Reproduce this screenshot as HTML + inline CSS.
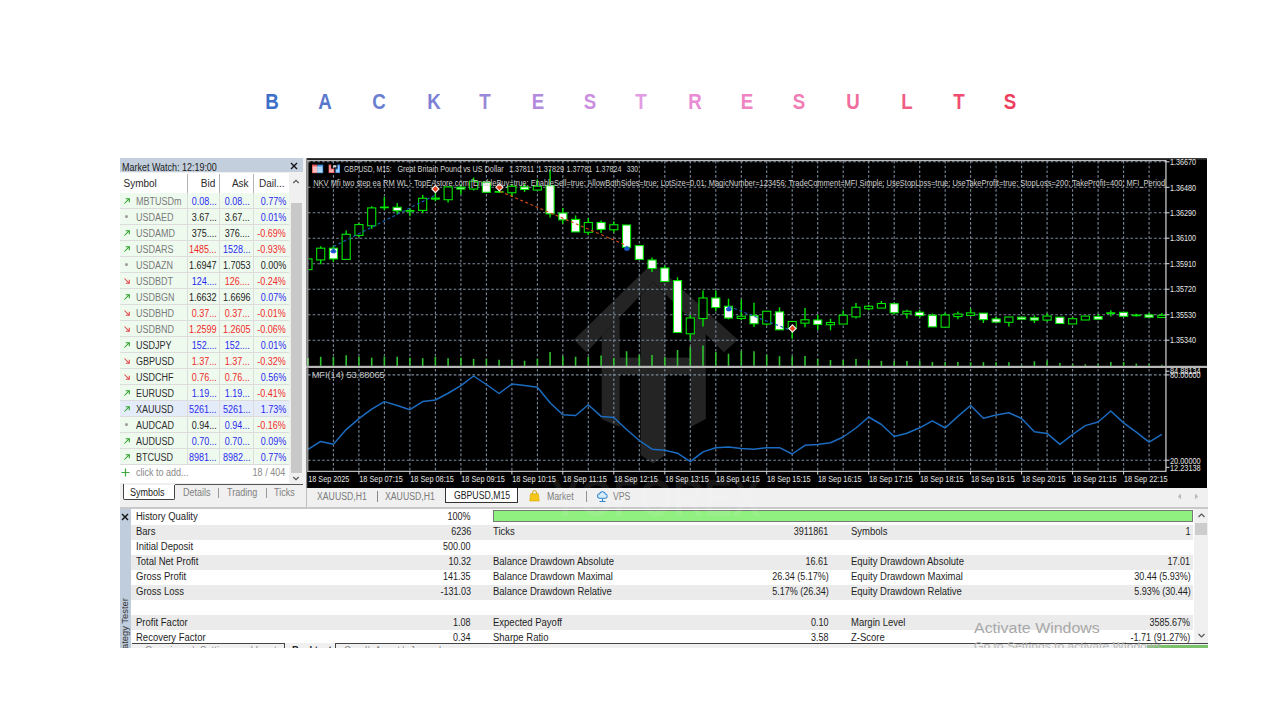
<!DOCTYPE html>
<html><head><meta charset="utf-8"><style>
html,body{margin:0;padding:0;background:#fff}
body{width:1280px;height:720px;position:relative;overflow:hidden;font-family:"Liberation Sans", sans-serif}
.t{position:absolute;white-space:nowrap;line-height:1;font-family:"Liberation Sans", sans-serif}
.r{text-align:right}
.tt{position:absolute;top:91.7px;width:40px;text-align:center;font-size:21.5px;font-weight:bold;line-height:1;transform:scaleX(0.87);transform-origin:50% 0;font-family:"Liberation Sans", sans-serif}
</style></head><body>
<div class="tt" style="left:251.5px;color:#3c70c8">B</div>
<div class="tt" style="left:304.8px;color:#5877cc">A</div>
<div class="tt" style="left:359.2px;color:#6b7fd2">C</div>
<div class="tt" style="left:413.5px;color:#7e80d6">K</div>
<div class="tt" style="left:465.2px;color:#9a88d8">T</div>
<div class="tt" style="left:517.6px;color:#b38bdc">E</div>
<div class="tt" style="left:569.5px;color:#cc8fe0">S</div>
<div class="tt" style="left:621px;color:#e39ce4">T</div>
<div class="tt" style="left:674.6px;color:#e88cd4">R</div>
<div class="tt" style="left:727px;color:#ee84c2">E</div>
<div class="tt" style="left:779px;color:#f07eb4">S</div>
<div class="tt" style="left:833px;color:#f06d9c">U</div>
<div class="tt" style="left:887px;color:#f05d86">L</div>
<div class="tt" style="left:938.5px;color:#f04d72">T</div>
<div class="tt" style="left:990.3px;color:#ef3f5e">S</div>
<div style="position:absolute;left:119.7px;top:158px;width:186.3px;height:350px;background:#f0f0f0"></div>
<div style="position:absolute;left:119.7px;top:158.3px;width:183.8px;height:14.2px;background:#c3cfdd"></div>
<div class="t" style="left:121.5px;top:162.6px;font-size:10.2px;color:#1c1c1c;transform:scaleX(0.88);transform-origin:0 0;">Market Watch: 12:19:00</div>
<svg style="position:absolute;left:290.1px;top:162px" width="8" height="8" viewBox="0 0 8 8"><path d="M1 1 L7 7 M7 1 L1 7" stroke="#111" stroke-width="1.4"/></svg>
<div style="position:absolute;left:119.7px;top:172.5px;width:169.8px;height:20.5px;background:#fff"></div>
<div style="position:absolute;left:289.5px;top:172.5px;width:13.5px;height:311px;background:#f0f0f0"></div>
<div style="position:absolute;left:290.5px;top:203px;width:11.5px;height:270px;background:#c8c8c8"></div>
<svg style="position:absolute;left:291px;top:178px" width="10" height="7" viewBox="0 0 10 7"><path d="M2.3 5 L5 2.3 L7.7 5" stroke="#555" stroke-width="1.2" fill="none"/></svg>
<svg style="position:absolute;left:291px;top:475px" width="10" height="7" viewBox="0 0 10 7"><path d="M2.3 2 L5 4.7 L7.7 2" stroke="#555" stroke-width="1.2" fill="none"/></svg>
<div class="t" style="left:123.5px;top:179.2px;font-size:10px;color:#2a2a2a;transform:scaleX(1.0);transform-origin:0 0;">Symbol</div>
<div class="t" style="right:1064.70px;top:179.2px;font-size:10px;color:#2a2a2a;transform:scaleX(1.0);transform-origin:100% 0;">Bid</div>
<div class="t" style="right:1031.40px;top:179.2px;font-size:10px;color:#2a2a2a;transform:scaleX(1.0);transform-origin:100% 0;">Ask</div>
<div class="t" style="right:995.40px;top:179.2px;font-size:10px;color:#2a2a2a;transform:scaleX(1.0);transform-origin:100% 0;">Dail...</div>
<div style="position:absolute;left:186.6px;top:174px;width:1px;height:19px;background:#b4b4b4"></div>
<div style="position:absolute;left:219.4px;top:174px;width:1px;height:19px;background:#b4b4b4"></div>
<div style="position:absolute;left:252.5px;top:174px;width:1px;height:19px;background:#b4b4b4"></div>
<div style="position:absolute;left:119.7px;top:193px;width:169.8px;height:15px;background:#effaef"></div>
<div style="position:absolute;left:119.7px;top:208px;width:169.8px;height:1px;background:#dcdcdc"></div>
<div style="position:absolute;left:186.6px;top:193px;width:1px;height:15px;background:#dcdcdc"></div>
<div style="position:absolute;left:219.4px;top:193px;width:1px;height:15px;background:#dcdcdc"></div>
<div style="position:absolute;left:252.5px;top:193px;width:1px;height:15px;background:#dcdcdc"></div>
<svg style="position:absolute;left:122.5px;top:196.8px" width="8" height="8" viewBox="0 0 8 8"><path d="M1.5 6.5 L6.3 1.7 M2.8 1.7 H6.3 V5.2" stroke="#2aa52a" stroke-width="1.05" fill="none"/></svg>
<div class="t" style="left:135.7px;top:196.9px;font-size:10px;color:#7a7a7a;transform:scaleX(0.9);transform-origin:0 0;">MBTUSDm</div>
<div class="t" style="right:1063.30px;top:196.9px;font-size:10px;color:#2b2bf0;transform:scaleX(0.9);transform-origin:100% 0;">0.08...</div>
<div class="t" style="right:1029.80px;top:196.9px;font-size:10px;color:#2b2bf0;transform:scaleX(0.9);transform-origin:100% 0;">0.08...</div>
<div class="t" style="right:993.90px;top:196.9px;font-size:10px;color:#2b2bf0;transform:scaleX(0.9);transform-origin:100% 0;">0.77%</div>
<div style="position:absolute;left:119.7px;top:209px;width:169.8px;height:15px;background:#effaef"></div>
<div style="position:absolute;left:119.7px;top:224px;width:169.8px;height:1px;background:#dcdcdc"></div>
<div style="position:absolute;left:186.6px;top:209px;width:1px;height:15px;background:#dcdcdc"></div>
<div style="position:absolute;left:219.4px;top:209px;width:1px;height:15px;background:#dcdcdc"></div>
<div style="position:absolute;left:252.5px;top:209px;width:1px;height:15px;background:#dcdcdc"></div>
<div style="position:absolute;left:124.9px;top:215.20000000000002px;width:3.2px;height:3.2px;border-radius:50%;background:#9a9a9a"></div>
<div class="t" style="left:135.7px;top:212.9px;font-size:10px;color:#7a7a7a;transform:scaleX(0.9);transform-origin:0 0;">USDAED</div>
<div class="t" style="right:1063.30px;top:212.9px;font-size:10px;color:#222;transform:scaleX(0.9);transform-origin:100% 0;">3.67...</div>
<div class="t" style="right:1029.80px;top:212.9px;font-size:10px;color:#222;transform:scaleX(0.9);transform-origin:100% 0;">3.67...</div>
<div class="t" style="right:993.90px;top:212.9px;font-size:10px;color:#2b2bf0;transform:scaleX(0.9);transform-origin:100% 0;">0.01%</div>
<div style="position:absolute;left:119.7px;top:225px;width:169.8px;height:15px;background:#effaef"></div>
<div style="position:absolute;left:119.7px;top:240px;width:169.8px;height:1px;background:#dcdcdc"></div>
<div style="position:absolute;left:186.6px;top:225px;width:1px;height:15px;background:#dcdcdc"></div>
<div style="position:absolute;left:219.4px;top:225px;width:1px;height:15px;background:#dcdcdc"></div>
<div style="position:absolute;left:252.5px;top:225px;width:1px;height:15px;background:#dcdcdc"></div>
<svg style="position:absolute;left:122.5px;top:228.8px" width="8" height="8" viewBox="0 0 8 8"><path d="M1.5 6.5 L6.3 1.7 M2.8 1.7 H6.3 V5.2" stroke="#2aa52a" stroke-width="1.05" fill="none"/></svg>
<div class="t" style="left:135.7px;top:228.9px;font-size:10px;color:#7a7a7a;transform:scaleX(0.9);transform-origin:0 0;">USDAMD</div>
<div class="t" style="right:1063.30px;top:228.9px;font-size:10px;color:#222;transform:scaleX(0.9);transform-origin:100% 0;">375....</div>
<div class="t" style="right:1029.80px;top:228.9px;font-size:10px;color:#222;transform:scaleX(0.9);transform-origin:100% 0;">376....</div>
<div class="t" style="right:993.90px;top:228.9px;font-size:10px;color:#f02a2a;transform:scaleX(0.9);transform-origin:100% 0;">-0.69%</div>
<div style="position:absolute;left:119.7px;top:241px;width:169.8px;height:15px;background:#effaef"></div>
<div style="position:absolute;left:119.7px;top:256px;width:169.8px;height:1px;background:#dcdcdc"></div>
<div style="position:absolute;left:186.6px;top:241px;width:1px;height:15px;background:#dcdcdc"></div>
<div style="position:absolute;left:219.4px;top:241px;width:1px;height:15px;background:#dcdcdc"></div>
<div style="position:absolute;left:252.5px;top:241px;width:1px;height:15px;background:#dcdcdc"></div>
<svg style="position:absolute;left:122.5px;top:244.8px" width="8" height="8" viewBox="0 0 8 8"><path d="M1.5 6.5 L6.3 1.7 M2.8 1.7 H6.3 V5.2" stroke="#2aa52a" stroke-width="1.05" fill="none"/></svg>
<div class="t" style="left:135.7px;top:244.9px;font-size:10px;color:#7a7a7a;transform:scaleX(0.9);transform-origin:0 0;">USDARS</div>
<div class="t" style="right:1063.30px;top:244.9px;font-size:10px;color:#f02a2a;transform:scaleX(0.9);transform-origin:100% 0;">1485...</div>
<div class="t" style="right:1029.80px;top:244.9px;font-size:10px;color:#2b2bf0;transform:scaleX(0.9);transform-origin:100% 0;">1528...</div>
<div class="t" style="right:993.90px;top:244.9px;font-size:10px;color:#f02a2a;transform:scaleX(0.9);transform-origin:100% 0;">-0.93%</div>
<div style="position:absolute;left:119.7px;top:257px;width:169.8px;height:15px;background:#effaef"></div>
<div style="position:absolute;left:119.7px;top:272px;width:169.8px;height:1px;background:#dcdcdc"></div>
<div style="position:absolute;left:186.6px;top:257px;width:1px;height:15px;background:#dcdcdc"></div>
<div style="position:absolute;left:219.4px;top:257px;width:1px;height:15px;background:#dcdcdc"></div>
<div style="position:absolute;left:252.5px;top:257px;width:1px;height:15px;background:#dcdcdc"></div>
<div style="position:absolute;left:124.9px;top:263.2px;width:3.2px;height:3.2px;border-radius:50%;background:#9a9a9a"></div>
<div class="t" style="left:135.7px;top:260.9px;font-size:10px;color:#7a7a7a;transform:scaleX(0.9);transform-origin:0 0;">USDAZN</div>
<div class="t" style="right:1063.30px;top:260.9px;font-size:10px;color:#222;transform:scaleX(0.9);transform-origin:100% 0;">1.6947</div>
<div class="t" style="right:1029.80px;top:260.9px;font-size:10px;color:#222;transform:scaleX(0.9);transform-origin:100% 0;">1.7053</div>
<div class="t" style="right:993.90px;top:260.9px;font-size:10px;color:#222;transform:scaleX(0.9);transform-origin:100% 0;">0.00%</div>
<div style="position:absolute;left:119.7px;top:273px;width:169.8px;height:15px;background:#effaef"></div>
<div style="position:absolute;left:119.7px;top:288px;width:169.8px;height:1px;background:#dcdcdc"></div>
<div style="position:absolute;left:186.6px;top:273px;width:1px;height:15px;background:#dcdcdc"></div>
<div style="position:absolute;left:219.4px;top:273px;width:1px;height:15px;background:#dcdcdc"></div>
<div style="position:absolute;left:252.5px;top:273px;width:1px;height:15px;background:#dcdcdc"></div>
<svg style="position:absolute;left:122.5px;top:276.8px" width="8" height="8" viewBox="0 0 8 8"><path d="M1.5 1.5 L6.3 6.3 M2.8 6.3 H6.3 V2.8" stroke="#e04848" stroke-width="1.05" fill="none"/></svg>
<div class="t" style="left:135.7px;top:276.9px;font-size:10px;color:#7a7a7a;transform:scaleX(0.9);transform-origin:0 0;">USDBDT</div>
<div class="t" style="right:1063.30px;top:276.9px;font-size:10px;color:#2b2bf0;transform:scaleX(0.9);transform-origin:100% 0;">124....</div>
<div class="t" style="right:1029.80px;top:276.9px;font-size:10px;color:#f02a2a;transform:scaleX(0.9);transform-origin:100% 0;">126....</div>
<div class="t" style="right:993.90px;top:276.9px;font-size:10px;color:#f02a2a;transform:scaleX(0.9);transform-origin:100% 0;">-0.24%</div>
<div style="position:absolute;left:119.7px;top:289px;width:169.8px;height:15px;background:#effaef"></div>
<div style="position:absolute;left:119.7px;top:304px;width:169.8px;height:1px;background:#dcdcdc"></div>
<div style="position:absolute;left:186.6px;top:289px;width:1px;height:15px;background:#dcdcdc"></div>
<div style="position:absolute;left:219.4px;top:289px;width:1px;height:15px;background:#dcdcdc"></div>
<div style="position:absolute;left:252.5px;top:289px;width:1px;height:15px;background:#dcdcdc"></div>
<svg style="position:absolute;left:122.5px;top:292.8px" width="8" height="8" viewBox="0 0 8 8"><path d="M1.5 6.5 L6.3 1.7 M2.8 1.7 H6.3 V5.2" stroke="#2aa52a" stroke-width="1.05" fill="none"/></svg>
<div class="t" style="left:135.7px;top:292.9px;font-size:10px;color:#7a7a7a;transform:scaleX(0.9);transform-origin:0 0;">USDBGN</div>
<div class="t" style="right:1063.30px;top:292.9px;font-size:10px;color:#222;transform:scaleX(0.9);transform-origin:100% 0;">1.6632</div>
<div class="t" style="right:1029.80px;top:292.9px;font-size:10px;color:#222;transform:scaleX(0.9);transform-origin:100% 0;">1.6696</div>
<div class="t" style="right:993.90px;top:292.9px;font-size:10px;color:#2b2bf0;transform:scaleX(0.9);transform-origin:100% 0;">0.07%</div>
<div style="position:absolute;left:119.7px;top:305px;width:169.8px;height:15px;background:#effaef"></div>
<div style="position:absolute;left:119.7px;top:320px;width:169.8px;height:1px;background:#dcdcdc"></div>
<div style="position:absolute;left:186.6px;top:305px;width:1px;height:15px;background:#dcdcdc"></div>
<div style="position:absolute;left:219.4px;top:305px;width:1px;height:15px;background:#dcdcdc"></div>
<div style="position:absolute;left:252.5px;top:305px;width:1px;height:15px;background:#dcdcdc"></div>
<svg style="position:absolute;left:122.5px;top:308.8px" width="8" height="8" viewBox="0 0 8 8"><path d="M1.5 1.5 L6.3 6.3 M2.8 6.3 H6.3 V2.8" stroke="#e04848" stroke-width="1.05" fill="none"/></svg>
<div class="t" style="left:135.7px;top:308.9px;font-size:10px;color:#7a7a7a;transform:scaleX(0.9);transform-origin:0 0;">USDBHD</div>
<div class="t" style="right:1063.30px;top:308.9px;font-size:10px;color:#f02a2a;transform:scaleX(0.9);transform-origin:100% 0;">0.37...</div>
<div class="t" style="right:1029.80px;top:308.9px;font-size:10px;color:#f02a2a;transform:scaleX(0.9);transform-origin:100% 0;">0.37...</div>
<div class="t" style="right:993.90px;top:308.9px;font-size:10px;color:#f02a2a;transform:scaleX(0.9);transform-origin:100% 0;">-0.01%</div>
<div style="position:absolute;left:119.7px;top:321px;width:169.8px;height:15px;background:#effaef"></div>
<div style="position:absolute;left:119.7px;top:336px;width:169.8px;height:1px;background:#dcdcdc"></div>
<div style="position:absolute;left:186.6px;top:321px;width:1px;height:15px;background:#dcdcdc"></div>
<div style="position:absolute;left:219.4px;top:321px;width:1px;height:15px;background:#dcdcdc"></div>
<div style="position:absolute;left:252.5px;top:321px;width:1px;height:15px;background:#dcdcdc"></div>
<svg style="position:absolute;left:122.5px;top:324.8px" width="8" height="8" viewBox="0 0 8 8"><path d="M1.5 1.5 L6.3 6.3 M2.8 6.3 H6.3 V2.8" stroke="#e04848" stroke-width="1.05" fill="none"/></svg>
<div class="t" style="left:135.7px;top:324.9px;font-size:10px;color:#7a7a7a;transform:scaleX(0.9);transform-origin:0 0;">USDBND</div>
<div class="t" style="right:1063.30px;top:324.9px;font-size:10px;color:#f02a2a;transform:scaleX(0.9);transform-origin:100% 0;">1.2599</div>
<div class="t" style="right:1029.80px;top:324.9px;font-size:10px;color:#f02a2a;transform:scaleX(0.9);transform-origin:100% 0;">1.2605</div>
<div class="t" style="right:993.90px;top:324.9px;font-size:10px;color:#f02a2a;transform:scaleX(0.9);transform-origin:100% 0;">-0.06%</div>
<div style="position:absolute;left:119.7px;top:337px;width:169.8px;height:15px;background:#effaef"></div>
<div style="position:absolute;left:119.7px;top:352px;width:169.8px;height:1px;background:#dcdcdc"></div>
<div style="position:absolute;left:186.6px;top:337px;width:1px;height:15px;background:#dcdcdc"></div>
<div style="position:absolute;left:219.4px;top:337px;width:1px;height:15px;background:#dcdcdc"></div>
<div style="position:absolute;left:252.5px;top:337px;width:1px;height:15px;background:#dcdcdc"></div>
<svg style="position:absolute;left:122.5px;top:340.8px" width="8" height="8" viewBox="0 0 8 8"><path d="M1.5 6.5 L6.3 1.7 M2.8 1.7 H6.3 V5.2" stroke="#2aa52a" stroke-width="1.05" fill="none"/></svg>
<div class="t" style="left:135.7px;top:340.9px;font-size:10px;color:#2e2e2e;transform:scaleX(0.9);transform-origin:0 0;">USDJPY</div>
<div class="t" style="right:1063.30px;top:340.9px;font-size:10px;color:#2b2bf0;transform:scaleX(0.9);transform-origin:100% 0;">152....</div>
<div class="t" style="right:1029.80px;top:340.9px;font-size:10px;color:#2b2bf0;transform:scaleX(0.9);transform-origin:100% 0;">152....</div>
<div class="t" style="right:993.90px;top:340.9px;font-size:10px;color:#2b2bf0;transform:scaleX(0.9);transform-origin:100% 0;">0.01%</div>
<div style="position:absolute;left:119.7px;top:353px;width:169.8px;height:15px;background:#effaef"></div>
<div style="position:absolute;left:119.7px;top:368px;width:169.8px;height:1px;background:#dcdcdc"></div>
<div style="position:absolute;left:186.6px;top:353px;width:1px;height:15px;background:#dcdcdc"></div>
<div style="position:absolute;left:219.4px;top:353px;width:1px;height:15px;background:#dcdcdc"></div>
<div style="position:absolute;left:252.5px;top:353px;width:1px;height:15px;background:#dcdcdc"></div>
<svg style="position:absolute;left:122.5px;top:356.8px" width="8" height="8" viewBox="0 0 8 8"><path d="M1.5 1.5 L6.3 6.3 M2.8 6.3 H6.3 V2.8" stroke="#e04848" stroke-width="1.05" fill="none"/></svg>
<div class="t" style="left:135.7px;top:356.9px;font-size:10px;color:#2e2e2e;transform:scaleX(0.9);transform-origin:0 0;">GBPUSD</div>
<div class="t" style="right:1063.30px;top:356.9px;font-size:10px;color:#f02a2a;transform:scaleX(0.9);transform-origin:100% 0;">1.37...</div>
<div class="t" style="right:1029.80px;top:356.9px;font-size:10px;color:#f02a2a;transform:scaleX(0.9);transform-origin:100% 0;">1.37...</div>
<div class="t" style="right:993.90px;top:356.9px;font-size:10px;color:#f02a2a;transform:scaleX(0.9);transform-origin:100% 0;">-0.32%</div>
<div style="position:absolute;left:119.7px;top:369px;width:169.8px;height:15px;background:#effaef"></div>
<div style="position:absolute;left:119.7px;top:384px;width:169.8px;height:1px;background:#dcdcdc"></div>
<div style="position:absolute;left:186.6px;top:369px;width:1px;height:15px;background:#dcdcdc"></div>
<div style="position:absolute;left:219.4px;top:369px;width:1px;height:15px;background:#dcdcdc"></div>
<div style="position:absolute;left:252.5px;top:369px;width:1px;height:15px;background:#dcdcdc"></div>
<svg style="position:absolute;left:122.5px;top:372.8px" width="8" height="8" viewBox="0 0 8 8"><path d="M1.5 1.5 L6.3 6.3 M2.8 6.3 H6.3 V2.8" stroke="#e04848" stroke-width="1.05" fill="none"/></svg>
<div class="t" style="left:135.7px;top:372.9px;font-size:10px;color:#2e2e2e;transform:scaleX(0.9);transform-origin:0 0;">USDCHF</div>
<div class="t" style="right:1063.30px;top:372.9px;font-size:10px;color:#f02a2a;transform:scaleX(0.9);transform-origin:100% 0;">0.76...</div>
<div class="t" style="right:1029.80px;top:372.9px;font-size:10px;color:#f02a2a;transform:scaleX(0.9);transform-origin:100% 0;">0.76...</div>
<div class="t" style="right:993.90px;top:372.9px;font-size:10px;color:#2b2bf0;transform:scaleX(0.9);transform-origin:100% 0;">0.56%</div>
<div style="position:absolute;left:119.7px;top:385px;width:169.8px;height:15px;background:#effaef"></div>
<div style="position:absolute;left:119.7px;top:400px;width:169.8px;height:1px;background:#dcdcdc"></div>
<div style="position:absolute;left:186.6px;top:385px;width:1px;height:15px;background:#dcdcdc"></div>
<div style="position:absolute;left:219.4px;top:385px;width:1px;height:15px;background:#dcdcdc"></div>
<div style="position:absolute;left:252.5px;top:385px;width:1px;height:15px;background:#dcdcdc"></div>
<svg style="position:absolute;left:122.5px;top:388.8px" width="8" height="8" viewBox="0 0 8 8"><path d="M1.5 6.5 L6.3 1.7 M2.8 1.7 H6.3 V5.2" stroke="#2aa52a" stroke-width="1.05" fill="none"/></svg>
<div class="t" style="left:135.7px;top:388.9px;font-size:10px;color:#2e2e2e;transform:scaleX(0.9);transform-origin:0 0;">EURUSD</div>
<div class="t" style="right:1063.30px;top:388.9px;font-size:10px;color:#2b2bf0;transform:scaleX(0.9);transform-origin:100% 0;">1.19...</div>
<div class="t" style="right:1029.80px;top:388.9px;font-size:10px;color:#2b2bf0;transform:scaleX(0.9);transform-origin:100% 0;">1.19...</div>
<div class="t" style="right:993.90px;top:388.9px;font-size:10px;color:#f02a2a;transform:scaleX(0.9);transform-origin:100% 0;">-0.41%</div>
<div style="position:absolute;left:119.7px;top:401px;width:169.8px;height:15px;background:#e3ecf8"></div>
<div style="position:absolute;left:119.7px;top:416px;width:169.8px;height:1px;background:#dcdcdc"></div>
<div style="position:absolute;left:186.6px;top:401px;width:1px;height:15px;background:#dcdcdc"></div>
<div style="position:absolute;left:219.4px;top:401px;width:1px;height:15px;background:#dcdcdc"></div>
<div style="position:absolute;left:252.5px;top:401px;width:1px;height:15px;background:#dcdcdc"></div>
<svg style="position:absolute;left:122.5px;top:404.8px" width="8" height="8" viewBox="0 0 8 8"><path d="M1.5 6.5 L6.3 1.7 M2.8 1.7 H6.3 V5.2" stroke="#2aa52a" stroke-width="1.05" fill="none"/></svg>
<div class="t" style="left:135.7px;top:404.9px;font-size:10px;color:#2e2e2e;transform:scaleX(0.9);transform-origin:0 0;">XAUUSD</div>
<div class="t" style="right:1063.30px;top:404.9px;font-size:10px;color:#2b2bf0;transform:scaleX(0.9);transform-origin:100% 0;">5261...</div>
<div class="t" style="right:1029.80px;top:404.9px;font-size:10px;color:#2b2bf0;transform:scaleX(0.9);transform-origin:100% 0;">5261...</div>
<div class="t" style="right:993.90px;top:404.9px;font-size:10px;color:#2b2bf0;transform:scaleX(0.9);transform-origin:100% 0;">1.73%</div>
<div style="position:absolute;left:119.7px;top:417px;width:169.8px;height:15px;background:#effaef"></div>
<div style="position:absolute;left:119.7px;top:432px;width:169.8px;height:1px;background:#dcdcdc"></div>
<div style="position:absolute;left:186.6px;top:417px;width:1px;height:15px;background:#dcdcdc"></div>
<div style="position:absolute;left:219.4px;top:417px;width:1px;height:15px;background:#dcdcdc"></div>
<div style="position:absolute;left:252.5px;top:417px;width:1px;height:15px;background:#dcdcdc"></div>
<div style="position:absolute;left:124.9px;top:423.2px;width:3.2px;height:3.2px;border-radius:50%;background:#9a9a9a"></div>
<div class="t" style="left:135.7px;top:420.9px;font-size:10px;color:#2e2e2e;transform:scaleX(0.9);transform-origin:0 0;">AUDCAD</div>
<div class="t" style="right:1063.30px;top:420.9px;font-size:10px;color:#222;transform:scaleX(0.9);transform-origin:100% 0;">0.94...</div>
<div class="t" style="right:1029.80px;top:420.9px;font-size:10px;color:#2b2bf0;transform:scaleX(0.9);transform-origin:100% 0;">0.94...</div>
<div class="t" style="right:993.90px;top:420.9px;font-size:10px;color:#f02a2a;transform:scaleX(0.9);transform-origin:100% 0;">-0.16%</div>
<div style="position:absolute;left:119.7px;top:433px;width:169.8px;height:15px;background:#effaef"></div>
<div style="position:absolute;left:119.7px;top:448px;width:169.8px;height:1px;background:#dcdcdc"></div>
<div style="position:absolute;left:186.6px;top:433px;width:1px;height:15px;background:#dcdcdc"></div>
<div style="position:absolute;left:219.4px;top:433px;width:1px;height:15px;background:#dcdcdc"></div>
<div style="position:absolute;left:252.5px;top:433px;width:1px;height:15px;background:#dcdcdc"></div>
<svg style="position:absolute;left:122.5px;top:436.8px" width="8" height="8" viewBox="0 0 8 8"><path d="M1.5 6.5 L6.3 1.7 M2.8 1.7 H6.3 V5.2" stroke="#2aa52a" stroke-width="1.05" fill="none"/></svg>
<div class="t" style="left:135.7px;top:436.9px;font-size:10px;color:#2e2e2e;transform:scaleX(0.9);transform-origin:0 0;">AUDUSD</div>
<div class="t" style="right:1063.30px;top:436.9px;font-size:10px;color:#2b2bf0;transform:scaleX(0.9);transform-origin:100% 0;">0.70...</div>
<div class="t" style="right:1029.80px;top:436.9px;font-size:10px;color:#2b2bf0;transform:scaleX(0.9);transform-origin:100% 0;">0.70...</div>
<div class="t" style="right:993.90px;top:436.9px;font-size:10px;color:#2b2bf0;transform:scaleX(0.9);transform-origin:100% 0;">0.09%</div>
<div style="position:absolute;left:119.7px;top:449px;width:169.8px;height:15px;background:#effaef"></div>
<div style="position:absolute;left:119.7px;top:464px;width:169.8px;height:1px;background:#dcdcdc"></div>
<div style="position:absolute;left:186.6px;top:449px;width:1px;height:15px;background:#dcdcdc"></div>
<div style="position:absolute;left:219.4px;top:449px;width:1px;height:15px;background:#dcdcdc"></div>
<div style="position:absolute;left:252.5px;top:449px;width:1px;height:15px;background:#dcdcdc"></div>
<svg style="position:absolute;left:122.5px;top:452.8px" width="8" height="8" viewBox="0 0 8 8"><path d="M1.5 6.5 L6.3 1.7 M2.8 1.7 H6.3 V5.2" stroke="#2aa52a" stroke-width="1.05" fill="none"/></svg>
<div class="t" style="left:135.7px;top:452.9px;font-size:10px;color:#2e2e2e;transform:scaleX(0.9);transform-origin:0 0;">BTCUSD</div>
<div class="t" style="right:1063.30px;top:452.9px;font-size:10px;color:#2b2bf0;transform:scaleX(0.9);transform-origin:100% 0;">8981...</div>
<div class="t" style="right:1029.80px;top:452.9px;font-size:10px;color:#2b2bf0;transform:scaleX(0.9);transform-origin:100% 0;">8982...</div>
<div class="t" style="right:993.90px;top:452.9px;font-size:10px;color:#2b2bf0;transform:scaleX(0.9);transform-origin:100% 0;">0.77%</div>
<div style="position:absolute;left:119.7px;top:465px;width:169.8px;height:18px;background:#fff"></div>
<svg style="position:absolute;left:121.4px;top:468.4px" width="9" height="9" viewBox="0 0 9 9"><path d="M4.5 0.5 V8.5 M0.5 4.5 H8.5" stroke="#3aa83a" stroke-width="1.2"/></svg>
<div class="t" style="left:135.7px;top:467.6px;font-size:10px;color:#8a8a8a;transform:scaleX(0.9);transform-origin:0 0;">click to add...</div>
<div class="t" style="right:994.50px;top:467.6px;font-size:10px;color:#8a8a8a;transform:scaleX(0.9);transform-origin:100% 0;">18 / 404</div>
<div style="position:absolute;left:174.5px;top:484px;width:128.5px;height:1.4px;background:#555"></div>
<div style="position:absolute;left:122.6px;top:484.5px;width:50.6px;height:14.4px;border:1.3px solid #444;border-top:none;background:#fff;border-radius:0 0 2px 2px"></div>
<div style="position:absolute;left:122.6px;top:484px;width:1.3px;height:3px;background:#444"></div>
<div class="t" style="left:130.4px;top:487.9px;font-size:10px;color:#222;transform:scaleX(0.9);transform-origin:0 0;">Symbols</div>
<div class="t" style="left:182.6px;top:487.9px;font-size:10px;color:#808080;transform:scaleX(0.9);transform-origin:0 0;">Details</div>
<div style="position:absolute;left:218.4px;top:488px;width:1px;height:10px;background:#999"></div>
<div class="t" style="left:227.2px;top:487.9px;font-size:10px;color:#808080;transform:scaleX(0.9);transform-origin:0 0;">Trading</div>
<div style="position:absolute;left:265.5px;top:488px;width:1px;height:10px;background:#999"></div>
<div class="t" style="left:274px;top:487.9px;font-size:10px;color:#808080;transform:scaleX(0.9);transform-origin:0 0;">Ticks</div>
<svg width="901" height="330" viewBox="306 158 901 330" style="position:absolute;left:306px;top:158px">
<rect x="306" y="158" width="901" height="330" fill="#000"/>
<rect x="306" y="158" width="901" height="1.6" fill="#3a3a3a"/>
<rect x="306" y="158" width="1.2" height="330" fill="#8a8a8a"/>
<g fill="#242424">
<polygon points="573.9,339.7 653,262.5 737.8,339.7 723.9,352.2 653,282 586.4,352.2"/>
<polygon points="601.7,336.1 619.7,317.2 619.7,427 601.7,419"/>
<polygon points="640.6,295.5 653,282 665.6,295 665.6,455 653,463.5 640.6,455"/>
<polygon points="690.6,319 705.8,334 705.8,419 690.6,427"/>
<rect x="603.7" y="357.6" width="101.1" height="17.1"/>
</g>
<g stroke="#7c8a9a" stroke-width="1.1" stroke-dasharray="2.6 2.1"><line x1="308" y1="161.8" x2="1166" y2="161.8"/><line x1="308" y1="187.3" x2="1166" y2="187.3"/><line x1="308" y1="212.8" x2="1166" y2="212.8"/><line x1="308" y1="238.2" x2="1166" y2="238.2"/><line x1="308" y1="263.7" x2="1166" y2="263.7"/><line x1="308" y1="289.2" x2="1166" y2="289.2"/><line x1="308" y1="314.7" x2="1166" y2="314.7"/><line x1="308" y1="340.2" x2="1166" y2="340.2"/><line x1="308" y1="374.9" x2="1166" y2="374.9"/><line x1="308" y1="460.2" x2="1166" y2="460.2"/><line x1="333.4" y1="161" x2="333.4" y2="365"/><line x1="333.4" y1="369" x2="333.4" y2="471"/><line x1="358.9" y1="161" x2="358.9" y2="365"/><line x1="358.9" y1="369" x2="358.9" y2="471"/><line x1="384.4" y1="161" x2="384.4" y2="365"/><line x1="384.4" y1="369" x2="384.4" y2="471"/><line x1="409.9" y1="161" x2="409.9" y2="365"/><line x1="409.9" y1="369" x2="409.9" y2="471"/><line x1="435.4" y1="161" x2="435.4" y2="365"/><line x1="435.4" y1="369" x2="435.4" y2="471"/><line x1="460.9" y1="161" x2="460.9" y2="365"/><line x1="460.9" y1="369" x2="460.9" y2="471"/><line x1="486.4" y1="161" x2="486.4" y2="365"/><line x1="486.4" y1="369" x2="486.4" y2="471"/><line x1="511.9" y1="161" x2="511.9" y2="365"/><line x1="511.9" y1="369" x2="511.9" y2="471"/><line x1="537.4" y1="161" x2="537.4" y2="365"/><line x1="537.4" y1="369" x2="537.4" y2="471"/><line x1="562.8" y1="161" x2="562.8" y2="365"/><line x1="562.8" y1="369" x2="562.8" y2="471"/><line x1="588.3" y1="161" x2="588.3" y2="365"/><line x1="588.3" y1="369" x2="588.3" y2="471"/><line x1="613.8" y1="161" x2="613.8" y2="365"/><line x1="613.8" y1="369" x2="613.8" y2="471"/><line x1="639.3" y1="161" x2="639.3" y2="365"/><line x1="639.3" y1="369" x2="639.3" y2="471"/><line x1="664.8" y1="161" x2="664.8" y2="365"/><line x1="664.8" y1="369" x2="664.8" y2="471"/><line x1="690.3" y1="161" x2="690.3" y2="365"/><line x1="690.3" y1="369" x2="690.3" y2="471"/><line x1="715.8" y1="161" x2="715.8" y2="365"/><line x1="715.8" y1="369" x2="715.8" y2="471"/><line x1="741.3" y1="161" x2="741.3" y2="365"/><line x1="741.3" y1="369" x2="741.3" y2="471"/><line x1="766.7" y1="161" x2="766.7" y2="365"/><line x1="766.7" y1="369" x2="766.7" y2="471"/><line x1="792.2" y1="161" x2="792.2" y2="365"/><line x1="792.2" y1="369" x2="792.2" y2="471"/><line x1="817.7" y1="161" x2="817.7" y2="365"/><line x1="817.7" y1="369" x2="817.7" y2="471"/><line x1="843.2" y1="161" x2="843.2" y2="365"/><line x1="843.2" y1="369" x2="843.2" y2="471"/><line x1="868.7" y1="161" x2="868.7" y2="365"/><line x1="868.7" y1="369" x2="868.7" y2="471"/><line x1="894.2" y1="161" x2="894.2" y2="365"/><line x1="894.2" y1="369" x2="894.2" y2="471"/><line x1="919.7" y1="161" x2="919.7" y2="365"/><line x1="919.7" y1="369" x2="919.7" y2="471"/><line x1="945.2" y1="161" x2="945.2" y2="365"/><line x1="945.2" y1="369" x2="945.2" y2="471"/><line x1="970.6" y1="161" x2="970.6" y2="365"/><line x1="970.6" y1="369" x2="970.6" y2="471"/><line x1="996.1" y1="161" x2="996.1" y2="365"/><line x1="996.1" y1="369" x2="996.1" y2="471"/><line x1="1021.6" y1="161" x2="1021.6" y2="365"/><line x1="1021.6" y1="369" x2="1021.6" y2="471"/><line x1="1047.1" y1="161" x2="1047.1" y2="365"/><line x1="1047.1" y1="369" x2="1047.1" y2="471"/><line x1="1072.6" y1="161" x2="1072.6" y2="365"/><line x1="1072.6" y1="369" x2="1072.6" y2="471"/><line x1="1098.1" y1="161" x2="1098.1" y2="365"/><line x1="1098.1" y1="369" x2="1098.1" y2="471"/><line x1="1123.6" y1="161" x2="1123.6" y2="365"/><line x1="1123.6" y1="369" x2="1123.6" y2="471"/><line x1="1149.1" y1="161" x2="1149.1" y2="365"/><line x1="1149.1" y1="369" x2="1149.1" y2="471"/></g>
<g stroke="#2fc02f" stroke-width="1.6"><line x1="308.0" y1="358" x2="308.0" y2="365.8"/><line x1="320.7" y1="356.8" x2="320.7" y2="365.8"/><line x1="333.4" y1="356.8" x2="333.4" y2="365.8"/><line x1="346.2" y1="355.2" x2="346.2" y2="365.8"/><line x1="358.9" y1="356.6" x2="358.9" y2="365.8"/><line x1="371.7" y1="357.7" x2="371.7" y2="365.8"/><line x1="384.4" y1="356.6" x2="384.4" y2="365.8"/><line x1="397.2" y1="356.8" x2="397.2" y2="365.8"/><line x1="409.9" y1="357.7" x2="409.9" y2="365.8"/><line x1="422.7" y1="358.2" x2="422.7" y2="365.8"/><line x1="435.4" y1="356.8" x2="435.4" y2="365.8"/><line x1="448.1" y1="358.2" x2="448.1" y2="365.8"/><line x1="460.9" y1="357.7" x2="460.9" y2="365.8"/><line x1="473.6" y1="358.9" x2="473.6" y2="365.8"/><line x1="486.4" y1="358.9" x2="486.4" y2="365.8"/><line x1="499.1" y1="359.8" x2="499.1" y2="365.8"/><line x1="511.9" y1="359.8" x2="511.9" y2="365.8"/><line x1="524.6" y1="360.8" x2="524.6" y2="365.8"/><line x1="537.4" y1="358.9" x2="537.4" y2="365.8"/><line x1="550.1" y1="351.9" x2="550.1" y2="365.8"/><line x1="562.8" y1="356.1" x2="562.8" y2="365.8"/><line x1="575.6" y1="356.8" x2="575.6" y2="365.8"/><line x1="588.3" y1="356.6" x2="588.3" y2="365.8"/><line x1="601.1" y1="355.6" x2="601.1" y2="365.8"/><line x1="613.8" y1="358" x2="613.8" y2="365.8"/><line x1="626.6" y1="351.25" x2="626.6" y2="365.8"/><line x1="639.3" y1="355" x2="639.3" y2="365.8"/><line x1="652.0" y1="355" x2="652.0" y2="365.8"/><line x1="664.8" y1="356.9" x2="664.8" y2="365.8"/><line x1="677.5" y1="350" x2="677.5" y2="365.8"/><line x1="690.3" y1="346.9" x2="690.3" y2="365.8"/><line x1="703.0" y1="345.6" x2="703.0" y2="365.8"/><line x1="715.8" y1="351.9" x2="715.8" y2="365.8"/><line x1="728.5" y1="353.75" x2="728.5" y2="365.8"/><line x1="741.3" y1="351" x2="741.3" y2="365.8"/><line x1="754.0" y1="351.25" x2="754.0" y2="365.8"/><line x1="766.7" y1="355" x2="766.7" y2="365.8"/><line x1="779.5" y1="356.25" x2="779.5" y2="365.8"/><line x1="792.2" y1="356.25" x2="792.2" y2="365.8"/><line x1="805.0" y1="356" x2="805.0" y2="365.8"/><line x1="817.7" y1="358.75" x2="817.7" y2="365.8"/><line x1="830.5" y1="360" x2="830.5" y2="365.8"/><line x1="843.2" y1="360" x2="843.2" y2="365.8"/><line x1="856.0" y1="359" x2="856.0" y2="365.8"/><line x1="868.7" y1="360" x2="868.7" y2="365.8"/><line x1="881.4" y1="361" x2="881.4" y2="365.8"/><line x1="894.2" y1="361" x2="894.2" y2="365.8"/><line x1="906.9" y1="361" x2="906.9" y2="365.8"/><line x1="919.7" y1="361" x2="919.7" y2="365.8"/><line x1="932.4" y1="362" x2="932.4" y2="365.8"/><line x1="945.2" y1="362" x2="945.2" y2="365.8"/><line x1="957.9" y1="362" x2="957.9" y2="365.8"/><line x1="970.6" y1="362.2" x2="970.6" y2="365.8"/><line x1="983.4" y1="362.2" x2="983.4" y2="365.8"/><line x1="996.1" y1="362.2" x2="996.1" y2="365.8"/><line x1="1008.9" y1="362.2" x2="1008.9" y2="365.8"/><line x1="1021.6" y1="364.8" x2="1021.6" y2="365.8"/><line x1="1034.4" y1="361.3" x2="1034.4" y2="365.8"/><line x1="1047.1" y1="360.5" x2="1047.1" y2="365.8"/><line x1="1059.9" y1="363" x2="1059.9" y2="365.8"/><line x1="1072.6" y1="364" x2="1072.6" y2="365.8"/><line x1="1085.3" y1="364.25" x2="1085.3" y2="365.8"/><line x1="1098.1" y1="364" x2="1098.1" y2="365.8"/><line x1="1110.8" y1="362" x2="1110.8" y2="365.8"/><line x1="1123.6" y1="362" x2="1123.6" y2="365.8"/><line x1="1136.3" y1="363.6" x2="1136.3" y2="365.8"/><line x1="1149.1" y1="364" x2="1149.1" y2="365.8"/><line x1="1161.8" y1="364.8" x2="1161.8" y2="365.8"/></g>
<defs><clipPath id="pc"><rect x="308.6" y="160.5" width="857" height="205.5"/></clipPath></defs>
<g clip-path="url(#pc)"><rect x="303.91" y="258.9" width="8.1" height="10.7" fill="#000" stroke="#00e600" stroke-width="1.1"/><line x1="320.7" y1="246.3" x2="320.7" y2="248.2" stroke="#00e600" stroke-width="1.4"/><line x1="320.7" y1="259.9" x2="320.7" y2="264.3" stroke="#00e600" stroke-width="1.4"/><rect x="316.65" y="248.2" width="8.1" height="11.7" fill="#000" stroke="#00e600" stroke-width="1.1"/><line x1="333.4" y1="245.5" x2="333.4" y2="248.2" stroke="#00e600" stroke-width="1.4"/><line x1="333.4" y1="258.9" x2="333.4" y2="262" stroke="#00e600" stroke-width="1.4"/><rect x="329.40" y="248.2" width="8.1" height="10.7" fill="#fff" stroke="#00e600" stroke-width="1.1"/><line x1="346.2" y1="230.4" x2="346.2" y2="234.3" stroke="#00e600" stroke-width="1.4"/><rect x="342.14" y="234.3" width="8.1" height="25.1" fill="#000" stroke="#00e600" stroke-width="1.1"/><line x1="358.9" y1="223.3" x2="358.9" y2="224.6" stroke="#00e600" stroke-width="1.4"/><line x1="358.9" y1="235.4" x2="358.9" y2="237" stroke="#00e600" stroke-width="1.4"/><rect x="354.89" y="224.6" width="8.1" height="10.8" fill="#000" stroke="#00e600" stroke-width="1.1"/><line x1="371.7" y1="206.25" x2="371.7" y2="207.9" stroke="#00e600" stroke-width="1.4"/><line x1="371.7" y1="225.8" x2="371.7" y2="228.75" stroke="#00e600" stroke-width="1.4"/><rect x="367.63" y="207.9" width="8.1" height="17.9" fill="#000" stroke="#00e600" stroke-width="1.1"/><line x1="384.4" y1="197" x2="384.4" y2="207.3" stroke="#00e600" stroke-width="1.4"/><line x1="384.4" y1="207.3" x2="384.4" y2="210" stroke="#00e600" stroke-width="1.4"/><line x1="379.9" y1="207.3" x2="388.9" y2="207.3" stroke="#00e600" stroke-width="1.8"/><line x1="397.2" y1="202.9" x2="397.2" y2="207.3" stroke="#00e600" stroke-width="1.4"/><line x1="397.2" y1="210.8" x2="397.2" y2="214.6" stroke="#00e600" stroke-width="1.4"/><rect x="393.12" y="207.3" width="8.1" height="3.5" fill="#fff" stroke="#00e600" stroke-width="1.1"/><line x1="409.9" y1="208.3" x2="409.9" y2="210.8" stroke="#00e600" stroke-width="1.4"/><line x1="409.9" y1="210.8" x2="409.9" y2="216.25" stroke="#00e600" stroke-width="1.4"/><line x1="405.4" y1="210.8" x2="414.4" y2="210.8" stroke="#00e600" stroke-width="1.8"/><line x1="422.7" y1="195" x2="422.7" y2="198.3" stroke="#00e600" stroke-width="1.4"/><line x1="422.7" y1="210.4" x2="422.7" y2="212.9" stroke="#00e600" stroke-width="1.4"/><rect x="418.61" y="198.3" width="8.1" height="12.1" fill="#000" stroke="#00e600" stroke-width="1.1"/><line x1="435.4" y1="192.5" x2="435.4" y2="198.3" stroke="#00e600" stroke-width="1.4"/><line x1="435.4" y1="199.6" x2="435.4" y2="201.25" stroke="#00e600" stroke-width="1.4"/><line x1="430.9" y1="198.3" x2="439.9" y2="198.3" stroke="#00e600" stroke-width="1.8"/><rect x="431.1" y="198.3" width="8.6" height="1.3" fill="#00e600"/><line x1="448.1" y1="186" x2="448.1" y2="186.9" stroke="#00e600" stroke-width="1.4"/><line x1="448.1" y1="199.75" x2="448.1" y2="202.5" stroke="#00e600" stroke-width="1.4"/><rect x="444.09" y="186.9" width="8.1" height="12.8" fill="#000" stroke="#00e600" stroke-width="1.1"/><line x1="460.9" y1="184.4" x2="460.9" y2="187.25" stroke="#00e600" stroke-width="1.4"/><line x1="460.9" y1="189" x2="460.9" y2="194.4" stroke="#00e600" stroke-width="1.4"/><rect x="456.84" y="187.25" width="8.1" height="1.8" fill="#fff" stroke="#00e600" stroke-width="1.1"/><line x1="473.6" y1="177.5" x2="473.6" y2="181.25" stroke="#00e600" stroke-width="1.4"/><line x1="473.6" y1="189" x2="473.6" y2="190.6" stroke="#00e600" stroke-width="1.4"/><rect x="469.58" y="181.25" width="8.1" height="7.8" fill="#000" stroke="#00e600" stroke-width="1.1"/><rect x="482.33" y="182.25" width="8.1" height="10.0" fill="#fff" stroke="#00e600" stroke-width="1.1"/><line x1="499.1" y1="190" x2="499.1" y2="191.9" stroke="#00e600" stroke-width="1.4"/><line x1="499.1" y1="191.9" x2="499.1" y2="193" stroke="#00e600" stroke-width="1.4"/><line x1="494.6" y1="191.9" x2="503.6" y2="191.9" stroke="#00e600" stroke-width="1.8"/><line x1="511.9" y1="183.75" x2="511.9" y2="186.25" stroke="#00e600" stroke-width="1.4"/><line x1="511.9" y1="192.75" x2="511.9" y2="196.9" stroke="#00e600" stroke-width="1.4"/><rect x="507.81" y="186.25" width="8.1" height="6.5" fill="#000" stroke="#00e600" stroke-width="1.1"/><line x1="524.6" y1="183.75" x2="524.6" y2="186.9" stroke="#00e600" stroke-width="1.4"/><line x1="524.6" y1="189.4" x2="524.6" y2="191.9" stroke="#00e600" stroke-width="1.4"/><rect x="520.56" y="186.9" width="8.1" height="2.5" fill="#fff" stroke="#00e600" stroke-width="1.1"/><line x1="537.4" y1="179.4" x2="537.4" y2="186.25" stroke="#00e600" stroke-width="1.4"/><rect x="533.30" y="186.25" width="8.1" height="3.8" fill="#000" stroke="#00e600" stroke-width="1.1"/><line x1="550.1" y1="169.4" x2="550.1" y2="185.6" stroke="#00e600" stroke-width="1.4"/><line x1="550.1" y1="213.75" x2="550.1" y2="217.5" stroke="#00e600" stroke-width="1.4"/><rect x="546.05" y="185.6" width="8.1" height="28.2" fill="#fff" stroke="#00e600" stroke-width="1.1"/><line x1="562.8" y1="208" x2="562.8" y2="213" stroke="#00e600" stroke-width="1.4"/><line x1="562.8" y1="219.75" x2="562.8" y2="223.75" stroke="#00e600" stroke-width="1.4"/><rect x="558.79" y="213" width="8.1" height="6.8" fill="#fff" stroke="#00e600" stroke-width="1.1"/><line x1="575.6" y1="215.6" x2="575.6" y2="219.4" stroke="#00e600" stroke-width="1.4"/><rect x="571.53" y="219.4" width="8.1" height="12.5" fill="#fff" stroke="#00e600" stroke-width="1.1"/><line x1="588.3" y1="218" x2="588.3" y2="222.5" stroke="#00e600" stroke-width="1.4"/><line x1="588.3" y1="232.25" x2="588.3" y2="235" stroke="#00e600" stroke-width="1.4"/><rect x="584.28" y="222.5" width="8.1" height="9.8" fill="#000" stroke="#00e600" stroke-width="1.1"/><line x1="601.1" y1="220.6" x2="601.1" y2="222.5" stroke="#00e600" stroke-width="1.4"/><line x1="601.1" y1="229.4" x2="601.1" y2="233" stroke="#00e600" stroke-width="1.4"/><rect x="597.02" y="222.5" width="8.1" height="6.9" fill="#fff" stroke="#00e600" stroke-width="1.1"/><line x1="613.8" y1="221.25" x2="613.8" y2="224.75" stroke="#00e600" stroke-width="1.4"/><line x1="613.8" y1="229.75" x2="613.8" y2="232.5" stroke="#00e600" stroke-width="1.4"/><rect x="609.77" y="224.75" width="8.1" height="5.0" fill="#000" stroke="#00e600" stroke-width="1.1"/><rect x="622.51" y="225" width="8.1" height="22.2" fill="#fff" stroke="#00e600" stroke-width="1.1"/><rect x="635.25" y="245.6" width="8.1" height="13.8" fill="#fff" stroke="#00e600" stroke-width="1.1"/><line x1="652.0" y1="257.5" x2="652.0" y2="260" stroke="#00e600" stroke-width="1.4"/><line x1="652.0" y1="268.5" x2="652.0" y2="271.9" stroke="#00e600" stroke-width="1.4"/><rect x="648.00" y="260" width="8.1" height="8.5" fill="#fff" stroke="#00e600" stroke-width="1.1"/><line x1="664.8" y1="265.6" x2="664.8" y2="268" stroke="#00e600" stroke-width="1.4"/><rect x="660.74" y="268" width="8.1" height="13.5" fill="#fff" stroke="#00e600" stroke-width="1.1"/><line x1="677.5" y1="277.25" x2="677.5" y2="280.6" stroke="#00e600" stroke-width="1.4"/><rect x="673.49" y="280.6" width="8.1" height="51.9" fill="#fff" stroke="#00e600" stroke-width="1.1"/><line x1="690.3" y1="315" x2="690.3" y2="318" stroke="#00e600" stroke-width="1.4"/><line x1="690.3" y1="333.75" x2="690.3" y2="340" stroke="#00e600" stroke-width="1.4"/><rect x="686.23" y="318" width="8.1" height="15.8" fill="#000" stroke="#00e600" stroke-width="1.1"/><line x1="703.0" y1="290.6" x2="703.0" y2="298" stroke="#00e600" stroke-width="1.4"/><line x1="703.0" y1="318.5" x2="703.0" y2="326.5" stroke="#00e600" stroke-width="1.4"/><rect x="698.97" y="298" width="8.1" height="20.5" fill="#000" stroke="#00e600" stroke-width="1.1"/><line x1="715.8" y1="290.6" x2="715.8" y2="298" stroke="#00e600" stroke-width="1.4"/><line x1="715.8" y1="307.5" x2="715.8" y2="311.25" stroke="#00e600" stroke-width="1.4"/><rect x="711.72" y="298" width="8.1" height="9.5" fill="#fff" stroke="#00e600" stroke-width="1.1"/><line x1="728.5" y1="298.75" x2="728.5" y2="306.25" stroke="#00e600" stroke-width="1.4"/><line x1="728.5" y1="318" x2="728.5" y2="319.4" stroke="#00e600" stroke-width="1.4"/><rect x="724.46" y="306.25" width="8.1" height="11.8" fill="#fff" stroke="#00e600" stroke-width="1.1"/><line x1="741.3" y1="299.4" x2="741.3" y2="316.25" stroke="#00e600" stroke-width="1.4"/><line x1="741.3" y1="318.5" x2="741.3" y2="320" stroke="#00e600" stroke-width="1.4"/><rect x="737.21" y="316.25" width="8.1" height="2.2" fill="#000" stroke="#00e600" stroke-width="1.1"/><line x1="754.0" y1="302.75" x2="754.0" y2="315.6" stroke="#00e600" stroke-width="1.4"/><line x1="754.0" y1="323.75" x2="754.0" y2="326.9" stroke="#00e600" stroke-width="1.4"/><rect x="749.95" y="315.6" width="8.1" height="8.1" fill="#fff" stroke="#00e600" stroke-width="1.1"/><line x1="766.7" y1="311" x2="766.7" y2="311.25" stroke="#00e600" stroke-width="1.4"/><line x1="766.7" y1="324" x2="766.7" y2="325.6" stroke="#00e600" stroke-width="1.4"/><rect x="762.69" y="311.25" width="8.1" height="12.8" fill="#000" stroke="#00e600" stroke-width="1.1"/><line x1="779.5" y1="307.25" x2="779.5" y2="311.9" stroke="#00e600" stroke-width="1.4"/><rect x="775.44" y="311.9" width="8.1" height="17.9" fill="#fff" stroke="#00e600" stroke-width="1.1"/><line x1="792.2" y1="328.75" x2="792.2" y2="338.75" stroke="#00e600" stroke-width="1.4"/><rect x="788.18" y="321.5" width="8.1" height="7.2" fill="#000" stroke="#00e600" stroke-width="1.1"/><line x1="805.0" y1="308" x2="805.0" y2="319.75" stroke="#00e600" stroke-width="1.4"/><line x1="805.0" y1="323.1" x2="805.0" y2="327.25" stroke="#00e600" stroke-width="1.4"/><rect x="800.93" y="319.75" width="8.1" height="3.4" fill="#000" stroke="#00e600" stroke-width="1.1"/><line x1="817.7" y1="314.75" x2="817.7" y2="320" stroke="#00e600" stroke-width="1.4"/><line x1="817.7" y1="324.4" x2="817.7" y2="330" stroke="#00e600" stroke-width="1.4"/><rect x="813.67" y="320" width="8.1" height="4.4" fill="#fff" stroke="#00e600" stroke-width="1.1"/><line x1="830.5" y1="318.75" x2="830.5" y2="322.5" stroke="#00e600" stroke-width="1.4"/><line x1="830.5" y1="324.75" x2="830.5" y2="330.25" stroke="#00e600" stroke-width="1.4"/><rect x="826.41" y="322.5" width="8.1" height="2.2" fill="#000" stroke="#00e600" stroke-width="1.1"/><line x1="843.2" y1="310.6" x2="843.2" y2="315.25" stroke="#00e600" stroke-width="1.4"/><rect x="839.16" y="315.25" width="8.1" height="8.8" fill="#000" stroke="#00e600" stroke-width="1.1"/><line x1="856.0" y1="303.1" x2="856.0" y2="307.25" stroke="#00e600" stroke-width="1.4"/><line x1="856.0" y1="316.9" x2="856.0" y2="318.5" stroke="#00e600" stroke-width="1.4"/><rect x="851.90" y="307.25" width="8.1" height="9.6" fill="#000" stroke="#00e600" stroke-width="1.1"/><line x1="868.7" y1="305" x2="868.7" y2="306.25" stroke="#00e600" stroke-width="1.4"/><line x1="868.7" y1="308.75" x2="868.7" y2="310.25" stroke="#00e600" stroke-width="1.4"/><rect x="864.65" y="306.25" width="8.1" height="2.5" fill="#000" stroke="#00e600" stroke-width="1.1"/><line x1="881.4" y1="301" x2="881.4" y2="303.5" stroke="#00e600" stroke-width="1.4"/><rect x="877.39" y="303.5" width="8.1" height="4.6" fill="#000" stroke="#00e600" stroke-width="1.1"/><line x1="894.2" y1="312.75" x2="894.2" y2="314.4" stroke="#00e600" stroke-width="1.4"/><rect x="890.13" y="303.75" width="8.1" height="9.0" fill="#fff" stroke="#00e600" stroke-width="1.1"/><line x1="906.9" y1="309.75" x2="906.9" y2="311.25" stroke="#00e600" stroke-width="1.4"/><line x1="906.9" y1="313.75" x2="906.9" y2="318.5" stroke="#00e600" stroke-width="1.4"/><rect x="902.88" y="311.25" width="8.1" height="2.5" fill="#000" stroke="#00e600" stroke-width="1.1"/><line x1="919.7" y1="310" x2="919.7" y2="312.25" stroke="#00e600" stroke-width="1.4"/><line x1="919.7" y1="315.6" x2="919.7" y2="317.5" stroke="#00e600" stroke-width="1.4"/><rect x="915.62" y="312.25" width="8.1" height="3.4" fill="#fff" stroke="#00e600" stroke-width="1.1"/><line x1="932.4" y1="313.5" x2="932.4" y2="315.25" stroke="#00e600" stroke-width="1.4"/><rect x="928.37" y="315.25" width="8.1" height="11.6" fill="#fff" stroke="#00e600" stroke-width="1.1"/><line x1="945.2" y1="312.75" x2="945.2" y2="315" stroke="#00e600" stroke-width="1.4"/><rect x="941.11" y="315" width="8.1" height="12.2" fill="#000" stroke="#00e600" stroke-width="1.1"/><line x1="957.9" y1="311.5" x2="957.9" y2="314" stroke="#00e600" stroke-width="1.4"/><line x1="957.9" y1="316.6" x2="957.9" y2="319.2" stroke="#00e600" stroke-width="1.4"/><rect x="953.85" y="314" width="8.1" height="2.6" fill="#000" stroke="#00e600" stroke-width="1.1"/><line x1="970.6" y1="308.6" x2="970.6" y2="312.9" stroke="#00e600" stroke-width="1.4"/><rect x="966.60" y="312.9" width="8.1" height="2.5" fill="#000" stroke="#00e600" stroke-width="1.1"/><line x1="983.4" y1="319.6" x2="983.4" y2="323" stroke="#00e600" stroke-width="1.4"/><rect x="979.34" y="313.2" width="8.1" height="6.4" fill="#fff" stroke="#00e600" stroke-width="1.1"/><line x1="996.1" y1="317" x2="996.1" y2="318.9" stroke="#00e600" stroke-width="1.4"/><rect x="992.09" y="318.9" width="8.1" height="3.2" fill="#fff" stroke="#00e600" stroke-width="1.1"/><line x1="1008.9" y1="322.3" x2="1008.9" y2="326.4" stroke="#00e600" stroke-width="1.4"/><rect x="1004.83" y="317" width="8.1" height="5.3" fill="#000" stroke="#00e600" stroke-width="1.1"/><rect x="1017.57" y="317.2" width="8.1" height="2.0" fill="#fff" stroke="#00e600" stroke-width="1.1"/><line x1="1034.4" y1="315.4" x2="1034.4" y2="317.8" stroke="#00e600" stroke-width="1.4"/><line x1="1034.4" y1="320.1" x2="1034.4" y2="323" stroke="#00e600" stroke-width="1.4"/><rect x="1030.32" y="317.8" width="8.1" height="2.3" fill="#fff" stroke="#00e600" stroke-width="1.1"/><line x1="1047.1" y1="313.2" x2="1047.1" y2="316.1" stroke="#00e600" stroke-width="1.4"/><line x1="1047.1" y1="320.1" x2="1047.1" y2="321.5" stroke="#00e600" stroke-width="1.4"/><rect x="1043.06" y="316.1" width="8.1" height="4.0" fill="#000" stroke="#00e600" stroke-width="1.1"/><rect x="1055.81" y="317.2" width="8.1" height="6.3" fill="#fff" stroke="#00e600" stroke-width="1.1"/><line x1="1072.6" y1="317" x2="1072.6" y2="318.7" stroke="#00e600" stroke-width="1.4"/><rect x="1068.55" y="318.7" width="8.1" height="5.2" fill="#000" stroke="#00e600" stroke-width="1.1"/><rect x="1081.29" y="316.1" width="8.1" height="3.9" fill="#000" stroke="#00e600" stroke-width="1.1"/><line x1="1098.1" y1="314" x2="1098.1" y2="316.6" stroke="#00e600" stroke-width="1.4"/><rect x="1094.04" y="316.6" width="8.1" height="2.6" fill="#fff" stroke="#00e600" stroke-width="1.1"/><line x1="1110.8" y1="310.3" x2="1110.8" y2="313.2" stroke="#00e600" stroke-width="1.4"/><line x1="1110.8" y1="313.2" x2="1110.8" y2="316.6" stroke="#00e600" stroke-width="1.4"/><line x1="1106.3" y1="313.2" x2="1115.3" y2="313.2" stroke="#00e600" stroke-width="1.8"/><rect x="1119.53" y="312.3" width="8.1" height="4.0" fill="#fff" stroke="#00e600" stroke-width="1.1"/><line x1="1136.3" y1="313.7" x2="1136.3" y2="315.3" stroke="#00e600" stroke-width="1.4"/><line x1="1136.3" y1="315.3" x2="1136.3" y2="316.6" stroke="#00e600" stroke-width="1.4"/><line x1="1131.8" y1="315.3" x2="1140.8" y2="315.3" stroke="#00e600" stroke-width="1.8"/><line x1="1149.1" y1="313" x2="1149.1" y2="314.9" stroke="#00e600" stroke-width="1.4"/><rect x="1145.01" y="314.9" width="8.1" height="2.3" fill="#fff" stroke="#00e600" stroke-width="1.1"/><line x1="1161.8" y1="313" x2="1161.8" y2="315.4" stroke="#00e600" stroke-width="1.4"/><rect x="1157.76" y="315.4" width="8.1" height="2.1" fill="#000" stroke="#00e600" stroke-width="1.1"/></g>
<g stroke-width="1.15" stroke-dasharray="3 2.5" fill="none">
<line x1="333.5" y1="246.5" x2="435.5" y2="195" stroke="#1560b0"/>
<line x1="500" y1="191.3" x2="625.5" y2="245" stroke="#d04818"/>
<line x1="729" y1="306.5" x2="792.5" y2="331" stroke="#1560b0"/>
</g>
<polygon points="333.4,248.4 336.2,251.0 335.0,253.0 331.79999999999995,253.0 330.59999999999997,251.0" fill="#1858c8" stroke="#1858c8" stroke-width="0.6" stroke-linejoin="round"/>
<polygon points="435.4,185.4 439.0,189 435.4,192.6 431.79999999999995,189" fill="#e8401c" stroke="#f0f0f0" stroke-width="1.1"/>
<polygon points="499.4,183.70000000000002 503.0,187.3 499.4,190.9 495.79999999999995,187.3" fill="#e8401c" stroke="#f0f0f0" stroke-width="1.1"/>
<polygon points="626.9,245.9 629.6999999999999,248.5 628.5,250.5 625.3,250.5 624.1,248.5" fill="#1858c8" stroke="#1858c8" stroke-width="0.6" stroke-linejoin="round"/>
<polygon points="728.8,306.40000000000003 731.5999999999999,309.0 730.4,311.0 727.1999999999999,311.0 726.0,309.0" fill="#1858c8" stroke="#1858c8" stroke-width="0.6" stroke-linejoin="round"/>
<polygon points="792.5,324.9 796.1,328.5 792.5,332.1 788.9,328.5" fill="#e8401c" stroke="#f0f0f0" stroke-width="1.1"/>
<polyline points="308.0,449.3 320.7,441.4 333.4,444.2 346.2,429.6 358.9,418.6 371.7,409.2 384.4,401.6 397.2,405.5 409.9,409.7 422.7,401.6 435.4,400 448.1,393.25 460.9,385.6 473.6,376 486.4,384.5 499.1,393.5 511.9,384 524.6,385.6 537.4,387.3 550.1,402.7 562.8,414.7 575.6,415.5 588.3,404.8 601.1,416.4 613.8,417.5 626.6,429.5 639.3,440.5 652.0,449.2 664.8,450.3 677.5,453.2 690.3,461.7 703.0,451.9 715.8,447.7 728.5,447 741.3,448.6 754.0,449.2 766.7,447.7 779.5,447.7 792.2,454 805.0,445.3 817.7,444.4 830.5,442.7 843.2,437 856.0,428 868.7,417 881.4,424.5 894.2,436.5 906.9,433.25 919.7,427.8 932.4,420.8 945.2,428 957.9,416.4 970.6,405.5 983.4,418.2 996.1,414.9 1008.9,412.7 1021.6,418.5 1034.4,431.7 1047.1,433.4 1059.9,444.4 1072.6,434.5 1085.3,425.6 1098.1,422 1110.8,411 1123.6,422.9 1136.3,432.2 1149.1,442.2 1161.8,434.4" fill="none" stroke="#1b6cc0" stroke-width="1.5" stroke-linejoin="round"/>
<g fill="#e8e8e8">
<rect x="307.4" y="160.2" width="858.8" height="0.9"/>
<rect x="307.4" y="160.2" width="0.9" height="206"/>
<rect x="1165.4" y="160.2" width="1.1" height="206"/>
<rect x="307.4" y="368.2" width="0.9" height="103.4"/>
<rect x="1165.4" y="368.2" width="1.1" height="103.4"/>
<rect x="307.4" y="470.8" width="858.8" height="1"/>
</g>
<rect x="306" y="365.8" width="901" height="2.2" fill="#b8b8b8"/>
<g fill="#e6e6e6" font-family='"Liberation Sans", sans-serif' font-size="8.6"><rect x="1166" y="161.3" width="3.5" height="1" fill="#ddd"/><text x="1170" y="165.0" textLength="26" lengthAdjust="spacingAndGlyphs">1.36670</text><rect x="1166" y="186.8" width="3.5" height="1" fill="#ddd"/><text x="1170" y="190.5" textLength="26" lengthAdjust="spacingAndGlyphs">1.36480</text><rect x="1166" y="212.3" width="3.5" height="1" fill="#ddd"/><text x="1170" y="216.0" textLength="26" lengthAdjust="spacingAndGlyphs">1.36290</text><rect x="1166" y="237.7" width="3.5" height="1" fill="#ddd"/><text x="1170" y="241.4" textLength="26" lengthAdjust="spacingAndGlyphs">1.36100</text><rect x="1166" y="263.2" width="3.5" height="1" fill="#ddd"/><text x="1170" y="266.9" textLength="26" lengthAdjust="spacingAndGlyphs">1.35910</text><rect x="1166" y="288.7" width="3.5" height="1" fill="#ddd"/><text x="1170" y="292.4" textLength="26" lengthAdjust="spacingAndGlyphs">1.35720</text><rect x="1166" y="314.2" width="3.5" height="1" fill="#ddd"/><text x="1170" y="317.9" textLength="26" lengthAdjust="spacingAndGlyphs">1.35530</text><rect x="1166" y="339.7" width="3.5" height="1" fill="#ddd"/><text x="1170" y="343.4" textLength="26" lengthAdjust="spacingAndGlyphs">1.35340</text><text x="1170" y="374.2" textLength="30.7" lengthAdjust="spacingAndGlyphs">84.88134</text><text x="1170" y="377.6" textLength="30.7" lengthAdjust="spacingAndGlyphs">80.00000</text><text x="1170" y="463.5" textLength="30.7" lengthAdjust="spacingAndGlyphs">20.00000</text><text x="1170" y="470.5" textLength="30.7" lengthAdjust="spacingAndGlyphs">12.23138</text><rect x="1166" y="370.7" width="3.5" height="1" fill="#ddd"/><rect x="1166" y="374.4" width="3.5" height="1" fill="#ddd"/><rect x="1166" y="459.7" width="3.5" height="1" fill="#ddd"/><rect x="1166" y="466.8" width="3.5" height="1" fill="#ddd"/><text x="308.3" y="482.3" textLength="41" lengthAdjust="spacingAndGlyphs">18 Sep 2025</text><rect x="358.4" y="471" width="1" height="3.5" fill="#ddd"/><text x="359.2" y="482.3" textLength="43.7" lengthAdjust="spacingAndGlyphs">18 Sep 07:15</text><rect x="409.4" y="471" width="1" height="3.5" fill="#ddd"/><text x="410.2" y="482.3" textLength="43.7" lengthAdjust="spacingAndGlyphs">18 Sep 08:15</text><rect x="460.4" y="471" width="1" height="3.5" fill="#ddd"/><text x="461.2" y="482.3" textLength="43.7" lengthAdjust="spacingAndGlyphs">18 Sep 09:15</text><rect x="511.4" y="471" width="1" height="3.5" fill="#ddd"/><text x="512.2" y="482.3" textLength="43.7" lengthAdjust="spacingAndGlyphs">18 Sep 10:15</text><rect x="562.3" y="471" width="1" height="3.5" fill="#ddd"/><text x="563.1" y="482.3" textLength="43.7" lengthAdjust="spacingAndGlyphs">18 Sep 11:15</text><rect x="613.3" y="471" width="1" height="3.5" fill="#ddd"/><text x="614.1" y="482.3" textLength="43.7" lengthAdjust="spacingAndGlyphs">18 Sep 12:15</text><rect x="664.3" y="471" width="1" height="3.5" fill="#ddd"/><text x="665.1" y="482.3" textLength="43.7" lengthAdjust="spacingAndGlyphs">18 Sep 13:15</text><rect x="715.3" y="471" width="1" height="3.5" fill="#ddd"/><text x="716.1" y="482.3" textLength="43.7" lengthAdjust="spacingAndGlyphs">18 Sep 14:15</text><rect x="766.2" y="471" width="1" height="3.5" fill="#ddd"/><text x="767.0" y="482.3" textLength="43.7" lengthAdjust="spacingAndGlyphs">18 Sep 15:15</text><rect x="817.2" y="471" width="1" height="3.5" fill="#ddd"/><text x="818.0" y="482.3" textLength="43.7" lengthAdjust="spacingAndGlyphs">18 Sep 16:15</text><rect x="868.2" y="471" width="1" height="3.5" fill="#ddd"/><text x="869.0" y="482.3" textLength="43.7" lengthAdjust="spacingAndGlyphs">18 Sep 17:15</text><rect x="919.2" y="471" width="1" height="3.5" fill="#ddd"/><text x="920.0" y="482.3" textLength="43.7" lengthAdjust="spacingAndGlyphs">18 Sep 18:15</text><rect x="970.1" y="471" width="1" height="3.5" fill="#ddd"/><text x="970.9" y="482.3" textLength="43.7" lengthAdjust="spacingAndGlyphs">18 Sep 19:15</text><rect x="1021.1" y="471" width="1" height="3.5" fill="#ddd"/><text x="1021.9" y="482.3" textLength="43.7" lengthAdjust="spacingAndGlyphs">18 Sep 20:15</text><rect x="1072.1" y="471" width="1" height="3.5" fill="#ddd"/><text x="1072.9" y="482.3" textLength="43.7" lengthAdjust="spacingAndGlyphs">18 Sep 21:15</text><rect x="1123.1" y="471" width="1" height="3.5" fill="#ddd"/><text x="1123.9" y="482.3" textLength="43.7" lengthAdjust="spacingAndGlyphs">18 Sep 22:15</text></g>
<g font-family='"Liberation Sans", sans-serif' fill="#d0d0d0" font-size="8.6">
<text x="344.1" y="172.3" textLength="47.5" lengthAdjust="spacingAndGlyphs">GBPUSD, M15:</text>
<text x="397.4" y="172.3" textLength="106.2" lengthAdjust="spacingAndGlyphs">Great Britain Pound vs US Dollar</text>
<text x="509" y="172.3" textLength="25.2" lengthAdjust="spacingAndGlyphs">1.37811</text>
<text x="537.8" y="172.3" textLength="26.2" lengthAdjust="spacingAndGlyphs">1.37829</text>
<text x="566.6" y="172.3" textLength="25.6" lengthAdjust="spacingAndGlyphs">1.37781</text>
<text x="595.5" y="172.3" textLength="25.9" lengthAdjust="spacingAndGlyphs">1.37824</text>
<text x="626.7" y="172.3" textLength="11.3" lengthAdjust="spacingAndGlyphs">330</text>
<text x="313.2" y="186.2" textLength="852" lengthAdjust="spacingAndGlyphs">NKV Mfi two step ea RM WL  - TopEAstore.com [EnableBuy=true; EnableSell=true; AllowBothSides=true; LotSize=0.01; MagicNumber=123456; TradeComment=MFI Simple; UseStopLoss=true; UseTakeProfit=true; StopLoss=200; TakeProfit=400; MFI_Period</text>
<text x="311.7" y="378.3" textLength="73" lengthAdjust="spacingAndGlyphs" fill="#c4c4c4">MFI(14) 53.88065</text>
</g>
<g>
<rect x="312" y="164.6" width="5.3" height="8.6" fill="#e85a5a"/><rect x="317.3" y="164.6" width="5.9" height="8.6" fill="#3d8ee0"/>
<rect x="312.8" y="166.2" width="4.5" height="6.2" fill="#f6a0a0"/><rect x="317.3" y="166.2" width="5.1" height="6.2" fill="#8cc4f4"/>
<g fill="#fff" opacity="0.85"><rect x="312.8" y="167.6" width="9.6" height="0.7"/><rect x="312.8" y="169.6" width="9.6" height="0.7"/><rect x="312.8" y="171.5" width="9.6" height="0.7"/></g>
<path d="M328.6 164.6 H331.2 V168.6 H334.3 V173.1 H328.6 Z" fill="#e85a5a"/><path d="M329.4 165.4 H330.5 V169.4 H333.5 V172.3 H329.4 Z" fill="#f8b0b0"/>
<rect x="333.2" y="165.2" width="3.2" height="2.2" fill="#d8d8d8"/>
<path d="M337.3 164.6 H340 V173.1 H335.4 V168.6 H337.3 Z" fill="#3d8ee0"/><path d="M338 165.4 H339.2 V172.3 H336.2 V169.4 H338 Z" fill="#9ccff8"/>
</g>
</svg>
<div style="position:absolute;left:306px;top:488px;width:902px;height:19.5px;background:#f0f0f0"></div>
<div style="position:absolute;left:306px;top:488px;width:1px;height:19.5px;background:#c0c0c0"></div>
<div class="t" style="left:317.4px;top:491.8px;font-size:10px;color:#7a7a7a;transform:scaleX(0.87);transform-origin:0 0;">XAUUSD,H1</div>
<div style="position:absolute;left:376.5px;top:490.5px;width:1px;height:11px;background:#888"></div>
<div class="t" style="left:385px;top:491.8px;font-size:10px;color:#7a7a7a;transform:scaleX(0.87);transform-origin:0 0;">XAUUSD,H1</div>
<div style="position:absolute;left:444.8px;top:488px;width:71px;height:13.8px;background:#fff;border:1.2px solid #333;border-top:none"></div>
<div class="t" style="left:453.8px;top:490.8px;font-size:10px;color:#1a1a1a;transform:scaleX(0.87);transform-origin:0 0;">GBPUSD,M15</div>
<svg style="position:absolute;left:529px;top:490px" width="11" height="12" viewBox="0 0 11 12"><path d="M3.4 4 V2.8 a2.1 2.1 0 0 1 4.2 0 V4" stroke="#d0a000" stroke-width="1" fill="none"/><path d="M1.6 3.8 H9.4 L10.2 11 H0.8 Z" fill="#f5c518" stroke="#d8a800" stroke-width="0.6"/></svg>
<div class="t" style="left:546.9px;top:491.8px;font-size:10px;color:#7a7a7a;transform:scaleX(0.87);transform-origin:0 0;">Market</div>
<div style="position:absolute;left:586.3px;top:490.5px;width:1px;height:11px;background:#888"></div>
<svg style="position:absolute;left:595.5px;top:489.5px" width="13" height="13" viewBox="0 0 13 13"><path d="M3.2 8.2 a2.3 2.3 0 0 1 0.3 -4.5 a3.2 3.2 0 0 1 6 0.3 a2.2 2.2 0 0 1 0.3 4.2 Z" stroke="#2f86d0" stroke-width="1.1" fill="#d8ecfa"/><path d="M6.5 8.5 V11.5 M3.5 11.5 H9.5" stroke="#2f86d0" stroke-width="1"/></svg>
<div class="t" style="left:612.7px;top:491.8px;font-size:10px;color:#7a7a7a;transform:scaleX(0.87);transform-origin:0 0;">VPS</div>
<svg style="position:absolute;left:1177px;top:493px" width="5" height="7" viewBox="0 0 5 7"><path d="M4 0.5 L0.8 3.5 L4 6.5Z" fill="#bbb"/></svg>
<svg style="position:absolute;left:1193.5px;top:493px" width="5" height="7" viewBox="0 0 5 7"><path d="M1 0.5 L4.2 3.5 L1 6.5Z" fill="#bbb"/></svg>
<div style="position:absolute;left:119.7px;top:507.5px;width:1088.5px;height:140.5px;background:#fff"></div>
<div style="position:absolute;left:119.7px;top:500px;width:186.3px;height:7.5px;background:#f0f0f0"></div>
<div style="position:absolute;left:119.7px;top:507px;width:1088.5px;height:1.8px;background:#c8c8c8"></div>
<div style="position:absolute;left:119.7px;top:508.8px;width:11.4px;height:139.2px;background:#bfcddc"></div>
<svg style="position:absolute;left:121.2px;top:513.2px" width="8" height="8" viewBox="0 0 8 8"><path d="M1 1 L7 7 M7 1 L1 7" stroke="#111" stroke-width="1.4"/></svg>
<div class="t" style="left:120.4px;top:661px;font-size:9.4px;color:#333;transform:rotate(-90deg);transform-origin:0 0;white-space:nowrap">Strategy Tester</div>
<div style="position:absolute;left:131.1px;top:509.4px;width:1062.4px;height:15.1px;background:#fff"></div>
<div class="t" style="left:135.6px;top:511.8px;font-size:10px;color:#1e1e1e;transform:scaleX(0.95);transform-origin:0 0;">History Quality</div>
<div class="t" style="right:809.10px;top:511.8px;font-size:10px;color:#1e1e1e;transform:scaleX(0.9);transform-origin:100% 0;">100%</div>
<div style="position:absolute;left:131.1px;top:524.5px;width:1062.4px;height:15.1px;background:#ebebeb"></div>
<div class="t" style="left:135.6px;top:526.9px;font-size:10px;color:#1e1e1e;transform:scaleX(0.95);transform-origin:0 0;">Bars</div>
<div class="t" style="right:809.10px;top:526.9px;font-size:10px;color:#1e1e1e;transform:scaleX(0.9);transform-origin:100% 0;">6236</div>
<div class="t" style="left:493.4px;top:526.9px;font-size:10px;color:#1e1e1e;transform:scaleX(0.95);transform-origin:0 0;">Ticks</div>
<div class="t" style="right:451.60px;top:526.9px;font-size:10px;color:#1e1e1e;transform:scaleX(0.9);transform-origin:100% 0;">3911861</div>
<div class="t" style="left:851.3px;top:526.9px;font-size:10px;color:#1e1e1e;transform:scaleX(0.95);transform-origin:0 0;">Symbols</div>
<div class="t" style="right:89.60px;top:526.9px;font-size:10px;color:#1e1e1e;transform:scaleX(0.9);transform-origin:100% 0;">1</div>
<div style="position:absolute;left:131.1px;top:539.6px;width:1062.4px;height:15.1px;background:#fff"></div>
<div class="t" style="left:135.6px;top:542.0px;font-size:10px;color:#1e1e1e;transform:scaleX(0.95);transform-origin:0 0;">Initial Deposit</div>
<div class="t" style="right:809.10px;top:542.0px;font-size:10px;color:#1e1e1e;transform:scaleX(0.9);transform-origin:100% 0;">500.00</div>
<div style="position:absolute;left:131.1px;top:554.7px;width:1062.4px;height:15.1px;background:#ebebeb"></div>
<div class="t" style="left:135.6px;top:557.1px;font-size:10px;color:#1e1e1e;transform:scaleX(0.95);transform-origin:0 0;">Total Net Profit</div>
<div class="t" style="right:809.10px;top:557.1px;font-size:10px;color:#1e1e1e;transform:scaleX(0.9);transform-origin:100% 0;">10.32</div>
<div class="t" style="left:493.4px;top:557.1px;font-size:10px;color:#1e1e1e;transform:scaleX(0.95);transform-origin:0 0;">Balance Drawdown Absolute</div>
<div class="t" style="right:451.60px;top:557.1px;font-size:10px;color:#1e1e1e;transform:scaleX(0.9);transform-origin:100% 0;">16.61</div>
<div class="t" style="left:851.3px;top:557.1px;font-size:10px;color:#1e1e1e;transform:scaleX(0.95);transform-origin:0 0;">Equity Drawdown Absolute</div>
<div class="t" style="right:89.60px;top:557.1px;font-size:10px;color:#1e1e1e;transform:scaleX(0.9);transform-origin:100% 0;">17.01</div>
<div style="position:absolute;left:131.1px;top:569.8px;width:1062.4px;height:15.1px;background:#fff"></div>
<div class="t" style="left:135.6px;top:572.2px;font-size:10px;color:#1e1e1e;transform:scaleX(0.95);transform-origin:0 0;">Gross Profit</div>
<div class="t" style="right:809.10px;top:572.2px;font-size:10px;color:#1e1e1e;transform:scaleX(0.9);transform-origin:100% 0;">141.35</div>
<div class="t" style="left:493.4px;top:572.2px;font-size:10px;color:#1e1e1e;transform:scaleX(0.95);transform-origin:0 0;">Balance Drawdown Maximal</div>
<div class="t" style="right:451.60px;top:572.2px;font-size:10px;color:#1e1e1e;transform:scaleX(0.9);transform-origin:100% 0;">26.34 (5.17%)</div>
<div class="t" style="left:851.3px;top:572.2px;font-size:10px;color:#1e1e1e;transform:scaleX(0.95);transform-origin:0 0;">Equity Drawdown Maximal</div>
<div class="t" style="right:89.60px;top:572.2px;font-size:10px;color:#1e1e1e;transform:scaleX(0.9);transform-origin:100% 0;">30.44 (5.93%)</div>
<div style="position:absolute;left:131.1px;top:584.9px;width:1062.4px;height:15.1px;background:#ebebeb"></div>
<div class="t" style="left:135.6px;top:587.3px;font-size:10px;color:#1e1e1e;transform:scaleX(0.95);transform-origin:0 0;">Gross Loss</div>
<div class="t" style="right:809.10px;top:587.3px;font-size:10px;color:#1e1e1e;transform:scaleX(0.9);transform-origin:100% 0;">-131.03</div>
<div class="t" style="left:493.4px;top:587.3px;font-size:10px;color:#1e1e1e;transform:scaleX(0.95);transform-origin:0 0;">Balance Drawdown Relative</div>
<div class="t" style="right:451.60px;top:587.3px;font-size:10px;color:#1e1e1e;transform:scaleX(0.9);transform-origin:100% 0;">5.17% (26.34)</div>
<div class="t" style="left:851.3px;top:587.3px;font-size:10px;color:#1e1e1e;transform:scaleX(0.95);transform-origin:0 0;">Equity Drawdown Relative</div>
<div class="t" style="right:89.60px;top:587.3px;font-size:10px;color:#1e1e1e;transform:scaleX(0.9);transform-origin:100% 0;">5.93% (30.44)</div>
<div style="position:absolute;left:131.1px;top:600.0px;width:1062.4px;height:15.1px;background:#fff"></div>
<div style="position:absolute;left:131.1px;top:615.1px;width:1062.4px;height:15.1px;background:#ebebeb"></div>
<div class="t" style="left:135.6px;top:617.5px;font-size:10px;color:#1e1e1e;transform:scaleX(0.95);transform-origin:0 0;">Profit Factor</div>
<div class="t" style="right:809.10px;top:617.5px;font-size:10px;color:#1e1e1e;transform:scaleX(0.9);transform-origin:100% 0;">1.08</div>
<div class="t" style="left:493.4px;top:617.5px;font-size:10px;color:#1e1e1e;transform:scaleX(0.95);transform-origin:0 0;">Expected Payoff</div>
<div class="t" style="right:451.60px;top:617.5px;font-size:10px;color:#1e1e1e;transform:scaleX(0.9);transform-origin:100% 0;">0.10</div>
<div class="t" style="left:851.3px;top:617.5px;font-size:10px;color:#1e1e1e;transform:scaleX(0.95);transform-origin:0 0;">Margin Level</div>
<div class="t" style="right:89.60px;top:617.5px;font-size:10px;color:#1e1e1e;transform:scaleX(0.9);transform-origin:100% 0;">3585.67%</div>
<div style="position:absolute;left:131.1px;top:630.2px;width:1062.4px;height:15.1px;background:#fff"></div>
<div class="t" style="left:135.6px;top:632.6px;font-size:10px;color:#1e1e1e;transform:scaleX(0.95);transform-origin:0 0;">Recovery Factor</div>
<div class="t" style="right:809.10px;top:632.6px;font-size:10px;color:#1e1e1e;transform:scaleX(0.9);transform-origin:100% 0;">0.34</div>
<div class="t" style="left:493.4px;top:632.6px;font-size:10px;color:#1e1e1e;transform:scaleX(0.95);transform-origin:0 0;">Sharpe Ratio</div>
<div class="t" style="right:451.60px;top:632.6px;font-size:10px;color:#1e1e1e;transform:scaleX(0.9);transform-origin:100% 0;">3.58</div>
<div class="t" style="left:851.3px;top:632.6px;font-size:10px;color:#1e1e1e;transform:scaleX(0.95);transform-origin:0 0;">Z-Score</div>
<div class="t" style="right:89.60px;top:632.6px;font-size:10px;color:#1e1e1e;transform:scaleX(0.9);transform-origin:100% 0;">-1.71 (91.27%)</div>
<div style="position:absolute;left:492.5px;top:510.3px;width:698.5px;height:9.8px;background:#90f080;border:0.9px solid #777"></div>
<div style="position:absolute;left:1193.5px;top:508.8px;width:14.5px;height:134px;background:#f0f0f0"></div>
<div style="position:absolute;left:1195px;top:522.5px;width:11.5px;height:12.5px;background:#cdcdcd"></div>
<svg style="position:absolute;left:1195.5px;top:512px" width="11" height="7" viewBox="0 0 11 7"><path d="M2.5 5 L5.5 2 L8.5 5" stroke="#555" stroke-width="1.2" fill="none"/></svg>
<svg style="position:absolute;left:1195.5px;top:632px" width="11" height="7" viewBox="0 0 11 7"><path d="M2.5 2 L5.5 5 L8.5 2" stroke="#555" stroke-width="1.2" fill="none"/></svg>
<div style="position:absolute;left:131.1px;top:642.6px;width:1077px;height:5.4px;background:#f0f0f0"></div>
<div style="position:absolute;left:132.3px;top:642.6px;width:152px;height:1.4px;background:#444"></div>
<div style="position:absolute;left:284px;top:642.6px;width:1.3px;height:5.4px;background:#444"></div>
<div style="position:absolute;left:334.7px;top:642.6px;width:873px;height:1.4px;background:#444"></div>
<div style="position:absolute;left:334.7px;top:642.6px;width:1.3px;height:5.4px;background:#444"></div>
<div style="position:absolute;left:1147px;top:645px;width:61px;height:3px;background:#7cc26c"></div>
<div class="t" style="left:145.3px;top:646.3px;font-size:10px;color:#888;transform:scaleX(0.95);transform-origin:0 0;">Overview</div>
<div class="t" style="left:192px;top:646.3px;font-size:10px;color:#999;transform:scaleX(1.0);transform-origin:0 0;">|</div>
<div class="t" style="left:200px;top:646.3px;font-size:10px;color:#888;transform:scaleX(0.95);transform-origin:0 0;">Settings and Inputs</div>
<div class="t" style="left:291.5px;top:646.3px;font-size:10px;color:#222;transform:scaleX(0.95);transform-origin:0 0;"><b>Backtest</b></div>
<div class="t" style="left:343.6px;top:646.3px;font-size:10px;color:#888;transform:scaleX(0.95);transform-origin:0 0;">Graph</div>
<div class="t" style="left:367.5px;top:646.3px;font-size:10px;color:#999;transform:scaleX(1.0);transform-origin:0 0;">|</div>
<div class="t" style="left:374.5px;top:646.3px;font-size:10px;color:#888;transform:scaleX(0.95);transform-origin:0 0;">Agents</div>
<div class="t" style="left:402px;top:646.3px;font-size:10px;color:#999;transform:scaleX(1.0);transform-origin:0 0;">|</div>
<div class="t" style="left:410px;top:646.3px;font-size:10px;color:#888;transform:scaleX(0.95);transform-origin:0 0;">Journal</div>
<div class="t" style="left:974px;top:619.5px;font-size:15.2px;color:#a8a8a8;transform:scaleX(1.05);transform-origin:0 0;">Activate Windows</div>
<div class="t" style="left:974px;top:640.5px;font-size:11px;color:#b8b8b8;transform:scaleX(1.1);transform-origin:0 0;">Go to Settings to activate Windows.</div>
<div style="position:absolute;left:0;top:648px;width:1280px;height:72px;background:#fff"></div>
<svg style="position:absolute;left:540px;top:470px" width="240" height="52" viewBox="540 470 240 52"><text x="551" y="516" font-family='"Liberation Sans", sans-serif' font-weight="bold" font-size="52" textLength="210" lengthAdjust="spacingAndGlyphs" fill="#fff" fill-opacity="0.09">YOFOREX</text></svg>
</body></html>
